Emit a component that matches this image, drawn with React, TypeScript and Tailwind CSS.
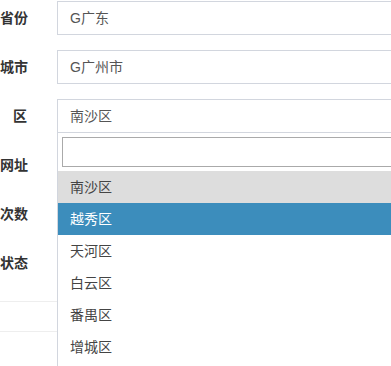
import React from 'react';

const fields = [
  { label: '省份', value: 'G广东' },
  { label: '城市', value: 'G广州市' },
  { label: '区', value: '南沙区' },
];

const emptyRows = ['网址', '次数', '状态'];

const options = ['南沙区', '越秀区', '天河区', '白云区', '番禺区', '增城区'];

export default function App() {
  return (
    <div className="relative w-[391px] h-[366px] overflow-hidden bg-white text-[14px] font-['Liberation_Sans','Noto_Sans_CJK_SC',sans-serif]">
      <div className="pt-px">
        {fields.map((f) => (
          <div key={f.label} className="flex items-center h-[34px] mb-[15px]">
            <label className="w-[42px] shrink-0 pr-[15px] text-right font-bold text-[#333] whitespace-nowrap">{f.label}</label>
            <div className="ml-[15px] w-[400px] shrink-0 h-[34px] border border-[#d2d6de] px-[12px] flex items-center text-[#555]">
              {f.value}
            </div>
          </div>
        ))}
        {emptyRows.map((l) => (
          <div key={l} className="flex items-center h-[34px] mb-[15px]">
            <label className="w-[42px] shrink-0 pr-[15px] text-right font-bold text-[#333] whitespace-nowrap">{l}</label>
          </div>
        ))}
        <div className="mt-[21px] border-t border-[#eee] h-[30px]" />
        <div className="border-t border-[#eee] h-[40px]" />
      </div>

      {/* open select dropdown */}
      <div className="absolute left-[57px] top-[133px] w-[360px] bg-white border-x border-b border-[#d2d6de]">
        <div className="p-[4px]">
          <div className="h-[30px] border border-[#aaa] bg-white" />
        </div>
        <ul className="h-[220px] overflow-hidden">
          {options.map((o, i) => (
            <li
              key={o}
              className={`h-[32px] pl-[12px] flex items-center ${
                i === 1 ? 'bg-[#3c8dbc] text-white' : i === 0 ? 'bg-[#ddd] text-[#444]' : 'text-[#444]'
              }`}
            >
              {o}
            </li>
          ))}
        </ul>
      </div>
    </div>
  );
}
